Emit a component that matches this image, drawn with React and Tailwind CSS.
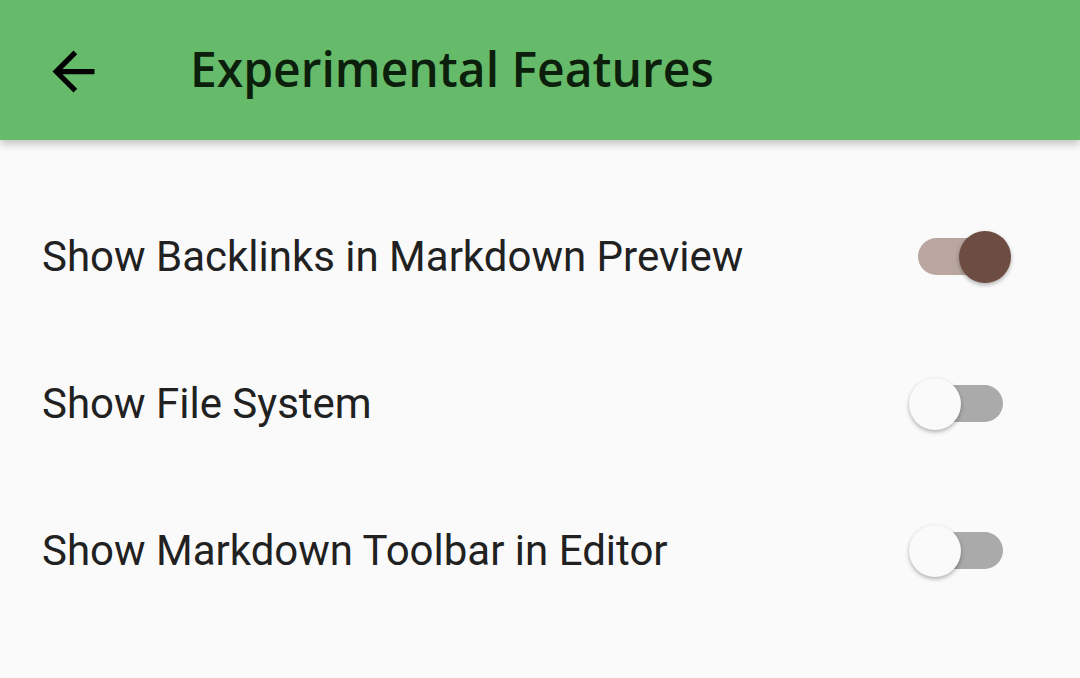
import React, { useState } from 'react';

function Toggle({ on, onChange }) {
  return (
    <button
      onClick={onChange}
      className="relative w-[104px] h-[56px] flex items-center pl-[9px]"
    >
      <span className={`block w-[85px] h-[37px] rounded-full ${on ? 'bg-[#b9a6a0]' : 'bg-[#aaaaaa]'}`} />
      <span
        className={`absolute top-[2px] w-[52px] h-[52px] rounded-full shadow-[0_2px_4px_rgba(0,0,0,0.3)] ${
          on ? 'left-[50px] bg-[#6d4c41]' : 'left-[0px] bg-[#fafafa]'
        }`}
      />
    </button>
  );
}

export default function App() {
  const [settings, setSettings] = useState([
    { label: 'Show Backlinks in Markdown Preview', on: true },
    { label: 'Show File System', on: false },
    { label: 'Show Markdown Toolbar in Editor', on: false },
  ]);

  const toggle = (i) =>
    setSettings((s) => s.map((item, j) => (j === i ? { ...item, on: !item.on } : item)));

  return (
    <div className="w-[1080px] h-[678px] bg-[#fafafa] overflow-hidden font-['Roboto',sans-serif]">
      {/* App bar */}
      <div className="relative z-10 h-[140px] bg-[#66bb6a] flex items-center shadow-[0_4px_8px_rgba(0,0,0,0.22)]">
        <div className="w-[190px] pl-[42px] pt-[2px]">
          <svg width="63" height="63" viewBox="0 0 24 24" fill="#000">
            <path d="M20 11H7.83l5.59-5.59L12 4l-8 8 8 8 1.41-1.41L7.83 13H20v-2z" />
          </svg>
        </div>
        <h1 className="text-[48px] font-semibold text-[#0b1f0c] font-['Open_Sans',sans-serif] leading-none pb-[2px]">
          Experimental Features
        </h1>
      </div>

      {/* Settings list */}
      <div className="pt-[43px]">
        {settings.map((s, i) => (
          <div key={s.label} className="h-[147px] flex items-center justify-between pl-[42px] pr-[67px]">
            <span className="text-[42px] text-[#212121] leading-none">{s.label}</span>
            <Toggle on={s.on} onChange={() => toggle(i)} />
          </div>
        ))}
      </div>
    </div>
  );
}
